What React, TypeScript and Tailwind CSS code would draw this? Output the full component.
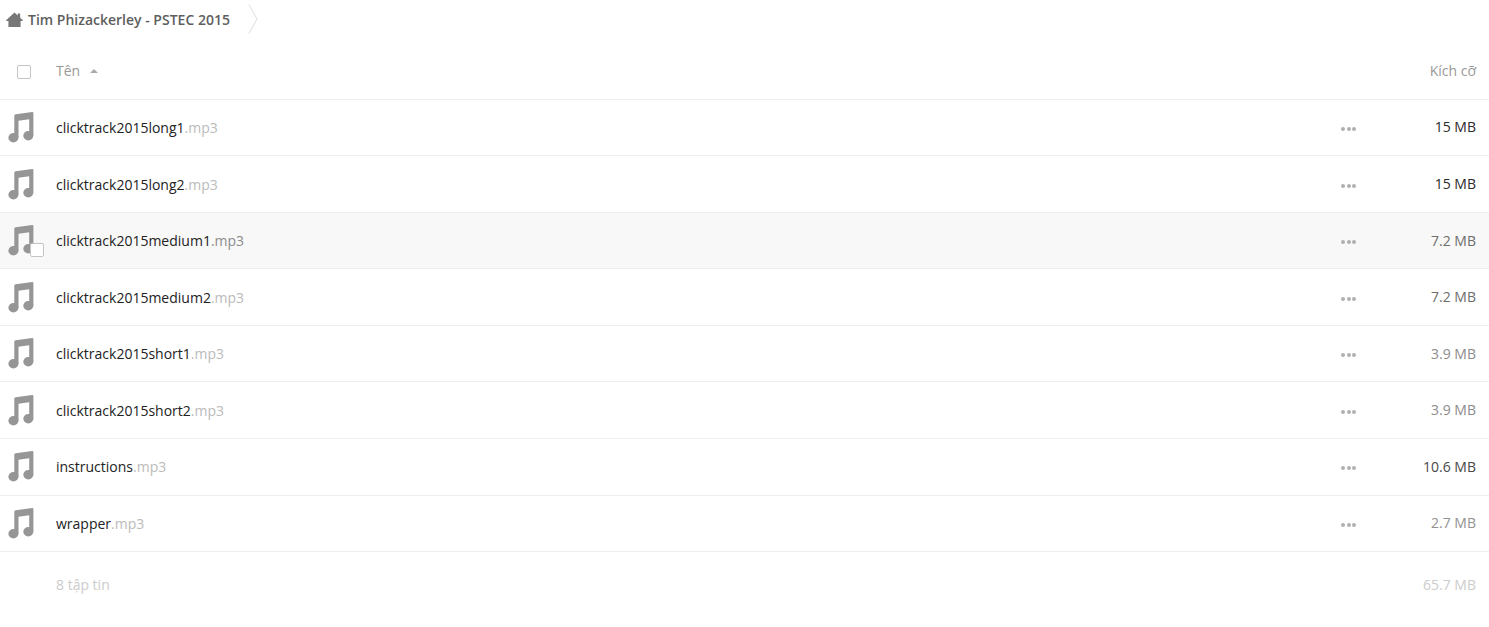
const files = [
  { name: "clicktrack2015long1", size: "15 MB", sizeColor: "text-[#2b2b2b]" },
  { name: "clicktrack2015long2", size: "15 MB", sizeColor: "text-[#2b2b2b]" },
  { name: "clicktrack2015medium1", size: "7.2 MB", sizeColor: "text-[#6e6e6e]", hover: true },
  { name: "clicktrack2015medium2", size: "7.2 MB", sizeColor: "text-[#6e6e6e]" },
  { name: "clicktrack2015short1", size: "3.9 MB", sizeColor: "text-[#8c8c8c]" },
  { name: "clicktrack2015short2", size: "3.9 MB", sizeColor: "text-[#8c8c8c]" },
  { name: "instructions", size: "10.6 MB", sizeColor: "text-[#484848]" },
  { name: "wrapper", size: "2.7 MB", sizeColor: "text-[#929292]" },
]

function MusicIcon() {
  return (
    <svg width="26" height="31" viewBox="0 0 26 31" className="block shrink-0">
      <g fill="#969696">
        <ellipse cx="5.400" cy="25.800" rx="5" ry="4.700" />
        <ellipse cx="20.300" cy="23.800" rx="5" ry="4.700" />
        <path d="M6.300 4c0-1 .6-1.600 1.500-1.700L24.200.1c.8-.1 1.200.3 1.200 1.100V24h-4.200V7.300L10.500 8.800V26H6.300z" />
      </g>
    </svg>
  )
}

function Dots() {
  return (
    <div className="flex gap-[1.500px]">
      <span className="h-[4px] w-[4px] rounded-full bg-[#b0b0b0]" />
      <span className="h-[4px] w-[4px] rounded-full bg-[#b0b0b0]" />
      <span className="h-[4px] w-[4px] rounded-full bg-[#b0b0b0]" />
    </div>
  )
}

function FileRow({ file }: { file: (typeof files)[number] }) {
  return (
    <div className={`flex h-[56.55px] items-center border-b border-[#eeeeee] ${file.hover ? "bg-[#f8f8f8]" : ""}`}>
      <div className="relative ml-[8px] w-[48px]">
        <MusicIcon />
        {file.hover && (
          <span className="absolute left-[22px] top-[18px] h-[14px] w-[14px] rounded-[2px] border-[1.500px] border-[#c4c4c4] bg-white" />
        )}
      </div>
      <div className="flex-1 text-[14px] text-[#222222]">
        {file.name}
        <span className={file.hover ? "text-[#8c8c8c]" : "text-[#bbbbbb]"}>.mp3</span>
      </div>
      <div className="mr-[54px] mt-[3px]">
        <Dots />
      </div>
      <div className={`w-[79px] pb-[1px] pr-[13px] text-right text-[14px] ${file.sizeColor}`}>{file.size}</div>
    </div>
  )
}

export default function App() {
  return (
    <div className="min-h-screen bg-white font-['Open_Sans','Noto_Sans',sans-serif]">
      <div className="flex h-[38px] items-center">
        <svg width="17" height="15" viewBox="0 0 18 16" className="ml-[6px] mr-[5px] shrink-0">
          <path fill="#777777" d="M9 .5 12.500 3.700V1.500h2.500v4.500L18 8.800l-.6.700H15.500V16H2.500V9.500H.6L0 8.800z" />
        </svg>
        <span className="text-[14px] font-semibold text-[#5e5e5e]">Tim Phizackerley - PSTEC 2015</span>
        <svg width="10" height="30" viewBox="0 0 10 30" className="ml-[18px] shrink-0">
          <path d="M1 .5 9 15 1 29.500" fill="none" stroke="#dddddd" />
        </svg>
      </div>
      <div className="flex h-[61.7px] items-center border-b border-[#eeeeee]">
        <span className="ml-[17px] mt-[8px] h-[14px] w-[14px] rounded-[2px] border-[1.500px] border-[#c4c4c4]" />
        <span className="ml-[25px] mt-[4px] text-[14px] text-[#999999]">Tên</span>
        <span className="ml-[10px] mt-[5px] h-0 w-0 border-x-[4.500px] border-b-[4px] border-x-transparent border-b-[#aaaaaa]" />
        <span className="ml-auto mt-[4px] pr-[13px] text-[14px] text-[#999999]">Kích cỡ</span>
      </div>
      {files.map((file) => (
        <FileRow key={file.name} file={file} />
      ))}
      <div className="flex h-[64px] items-center text-[14px] text-[#cccccc]">
        <span className="ml-[56px]">8 tập tin</span>
        <span className="ml-auto pr-[13px]">65.7 MB</span>
      </div>
    </div>
  )
}
